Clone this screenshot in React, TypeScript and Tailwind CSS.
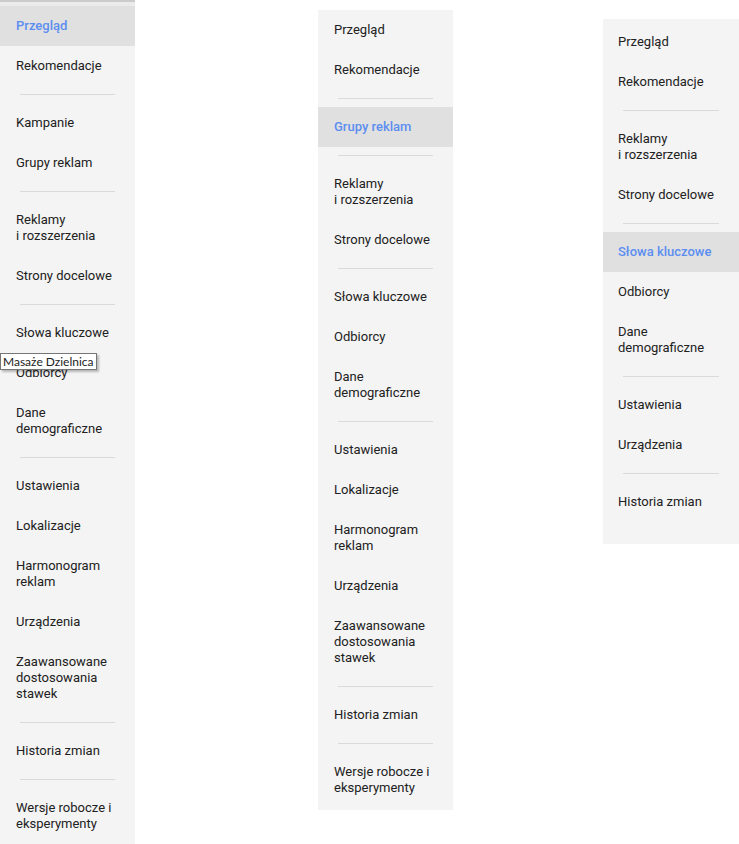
type Entry = { label: string[]; active?: boolean } | "divider";

const leftMenu: Entry[] = [
  { label: ["Przegląd"], active: true },
  { label: ["Rekomendacje"] },
  "divider",
  { label: ["Kampanie"] },
  { label: ["Grupy reklam"] },
  "divider",
  { label: ["Reklamy", "i rozszerzenia"] },
  { label: ["Strony docelowe"] },
  "divider",
  { label: ["Słowa kluczowe"] },
  { label: ["Odbiorcy"] },
  { label: ["Dane", "demograficzne"] },
  "divider",
  { label: ["Ustawienia"] },
  { label: ["Lokalizacje"] },
  { label: ["Harmonogram", "reklam"] },
  { label: ["Urządzenia"] },
  { label: ["Zaawansowane", "dostosowania", "stawek"] },
  "divider",
  { label: ["Historia zmian"] },
  "divider",
  { label: ["Wersje robocze i", "eksperymenty"] },
];

const middleMenu: Entry[] = [
  { label: ["Przegląd"] },
  { label: ["Rekomendacje"] },
  "divider",
  { label: ["Grupy reklam"], active: true },
  "divider",
  { label: ["Reklamy", "i rozszerzenia"] },
  { label: ["Strony docelowe"] },
  "divider",
  { label: ["Słowa kluczowe"] },
  { label: ["Odbiorcy"] },
  { label: ["Dane", "demograficzne"] },
  "divider",
  { label: ["Ustawienia"] },
  { label: ["Lokalizacje"] },
  { label: ["Harmonogram", "reklam"] },
  { label: ["Urządzenia"] },
  { label: ["Zaawansowane", "dostosowania", "stawek"] },
  "divider",
  { label: ["Historia zmian"] },
  "divider",
  { label: ["Wersje robocze i", "eksperymenty"] },
];

const rightMenu: Entry[] = [
  { label: ["Przegląd"] },
  { label: ["Rekomendacje"] },
  "divider",
  { label: ["Reklamy", "i rozszerzenia"] },
  { label: ["Strony docelowe"] },
  "divider",
  { label: ["Słowa kluczowe"], active: true },
  { label: ["Odbiorcy"] },
  { label: ["Dane", "demograficzne"] },
  "divider",
  { label: ["Ustawienia"] },
  { label: ["Urządzenia"] },
  "divider",
  { label: ["Historia zmian"] },
];

const NavList = ({ items, indent = "pl-4" }: { items: Entry[]; indent?: string }) => (
  <div>
    {items.map((item, i) =>
      item === "divider" ? (
        <div key={i} className="py-2">
          <div className="mx-5 h-px bg-[#dadada]" />
        </div>
      ) : (
        <div
          key={i}
          className={
            item.active
              ? `${indent} pr-2 py-3 bg-[#e0e0e0] text-[#5b8ef0] font-medium`
              : `${indent} pr-2 py-3 text-[#212121]`
          }
        >
          {item.label.map((line) => (
            <div key={line} className="text-[13px] leading-4 whitespace-nowrap">
              {line}
            </div>
          ))}
        </div>
      )
    )}
  </div>
);

export default function App() {
  return (
    <div
      className="relative flex items-start bg-white min-h-[844px]"
      style={{ fontFamily: "Roboto, 'Liberation Sans', sans-serif" }}
    >
      <div className="w-[135px] shrink-0 bg-[#f4f4f4] min-h-[844px]">
        <div className="h-[2px] bg-[#cbcbcb]" />
        <div className="h-[4px] bg-[#ebebeb]" />
        <NavList items={leftMenu} />
      </div>

      <div className="ml-[183px] mt-[10px] w-[135px] shrink-0 bg-[#f4f4f4] pb-[2px]">
        <NavList items={middleMenu} />
      </div>

      <div className="ml-[150px] mt-[19px] w-[136px] shrink-0 bg-[#f4f4f4] pt-[3px] pb-[22px]">
        <NavList items={rightMenu} indent="pl-[15px]" />
      </div>

      {/* hover tooltip from the browser */}
      <div
        className="absolute left-0 top-[353px] bg-white border border-[#767676] px-[2px] h-[17px] leading-[15px] text-[12px] text-[#222222] shadow-[2px_2px_2px_rgba(0,0,0,0.25)] whitespace-nowrap"
        style={{ fontFamily: "Lato, 'Noto Sans', sans-serif" }}
      >
        Masaże Dzielnica
      </div>
    </div>
  );
}
